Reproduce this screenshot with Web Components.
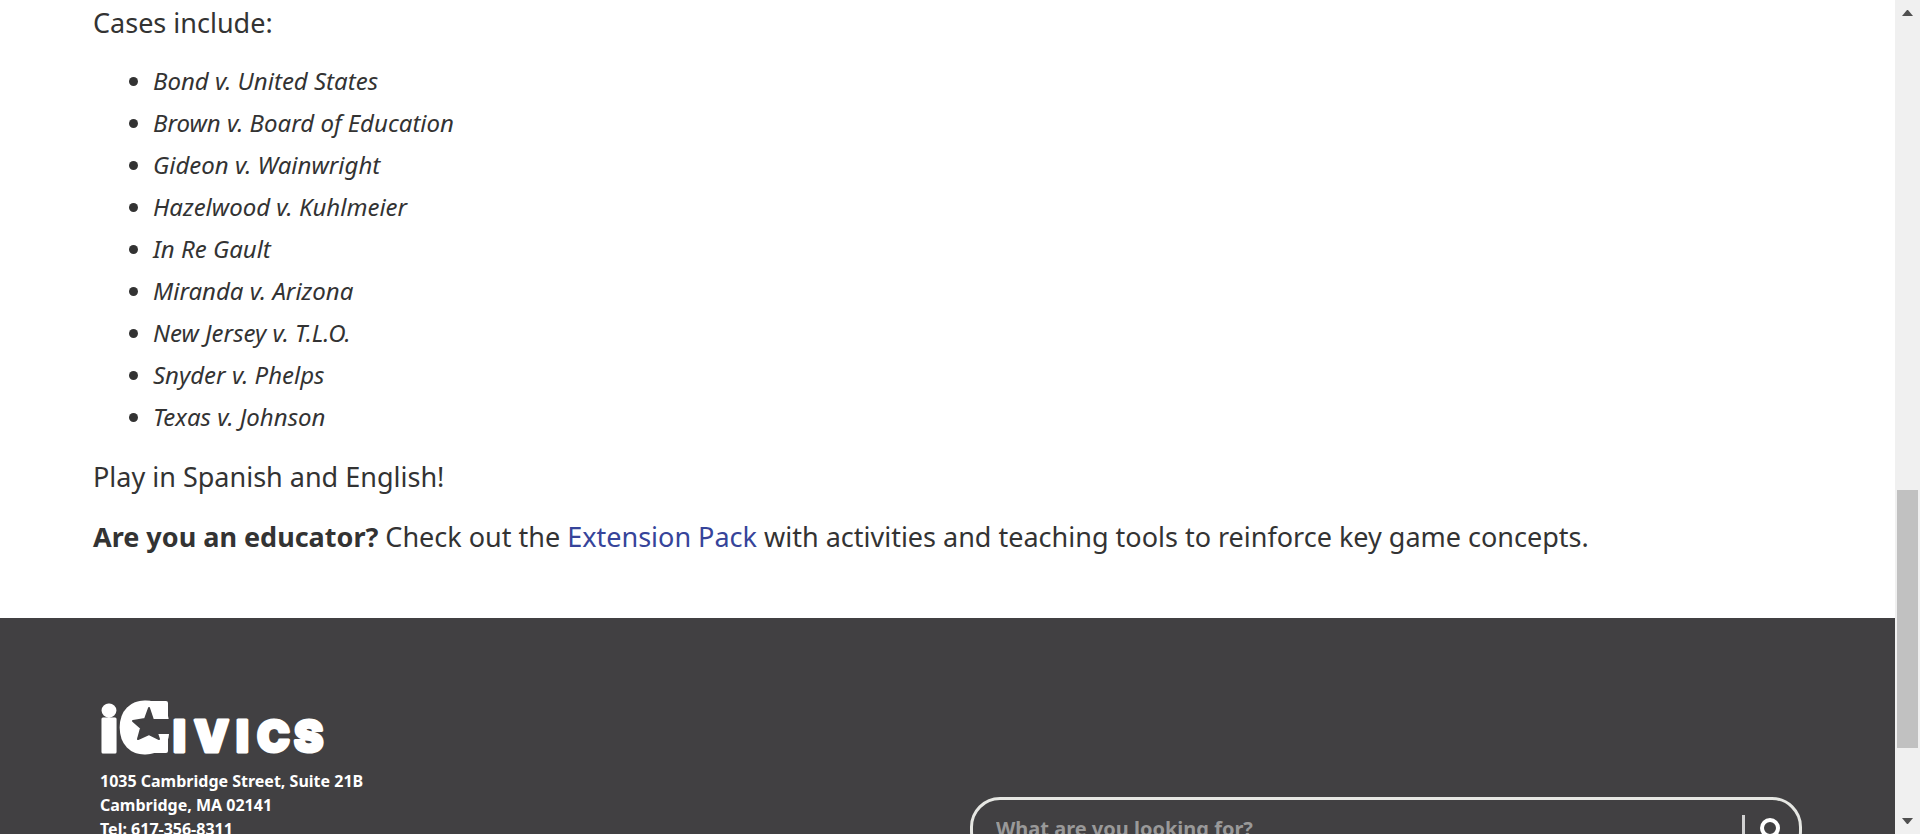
<!DOCTYPE html>
<html lang="en">
<head>
<meta charset="utf-8">
<title>iCivics</title>
<style>
  html, body { margin: 0; height: 100%; overflow: hidden; }
  body { font-family: "Noto Sans", sans-serif; color: #333; background: #fff; }
</style>
</head>
<body>
<site-page>
  <game-details>
    <p>Cases include:</p>
    <case-list cases="Bond v. United States|Brown v. Board of Education|Gideon v. Wainwright|Hazelwood v. Kuhlmeier|In Re Gault|Miranda v. Arizona|New Jersey v. T.L.O.|Snyder v. Phelps|Texas v. Johnson"></case-list>
    <p>Play in Spanish and English!</p>
    <p><strong>Are you an educator?</strong> Check out the <text-link href="#extension-pack">Extension Pack</text-link> with activities and teaching tools to reinforce key game concepts.</p>
  </game-details>
  <site-footer>
    <brand-logo slot="contact"></brand-logo>
    <postal-address slot="contact">
      <span>1035 Cambridge Street, Suite 21B</span>
      <span>Cambridge, MA 02141</span>
      <span>Tel: 617-356-8311</span>
    </postal-address>
    <site-search slot="search"></site-search>
  </site-footer>
  <scroll-rail slot="rail"></scroll-rail>
</site-page>
<script>
  const define = (name, html, setup) => {
    const template = document.createElement('template');
    template.innerHTML = html;
    customElements.define(name, class extends HTMLElement {
      constructor() {
        super();
        this.attachShadow({ mode: 'open' }).append(template.content.cloneNode(true));
      }
      connectedCallback() { if (setup) setup(this, this.shadowRoot); }
    });
  };

  define('site-page', `
    <style>
      :host { display: grid; grid-template-columns: minmax(0, 1fr) 25px; height: 100vh; overflow: hidden; }
      main { display: flex; flex-direction: column; min-height: 0; overflow: hidden; }
    </style>
    <main><slot></slot></main>
    <slot name="rail"></slot>`);

  define('game-details', `
    <style>
      :host { display: block; flex: none; padding: 0 93px 58px; font-size: 27px; line-height: 46px; }
      ::slotted(p) { margin: 0 0 14px; }
      ::slotted(p:last-child) { margin: 0; }
    </style>
    <slot></slot>`);

  define('text-link', `
    <style>
      :host { display: inline; }
      a { color: #36449a; text-decoration: none; }
    </style>
    <a><slot></slot></a>`, (host, root) => {
      root.querySelector('a').href = host.getAttribute('href');
    });

  define('case-list', `
    <style>
      :host { display: block; margin-bottom: 16px; font-size: 24px; line-height: 42px; }
      ul { margin: 0; padding-left: 60px; }
    </style>
    <ul></ul>`, (host, root) => {
      root.querySelector('ul').replaceChildren(...host.getAttribute('cases').split('|').map(name => {
        const li = document.createElement('li');
        const em = document.createElement('em');
        em.textContent = name;
        li.append(em);
        return li;
      }));
    });

  define('site-footer', `
    <style>
      :host { display: block; flex: 1 0 auto; background: #414042; color: #fff; }
      footer { display: grid; grid-template-columns: 1fr 1fr; gap: 38px; padding: 80px 93px 48px 100px; }
      .search { padding-top: 99px; }
    </style>
    <footer>
      <div><slot name="contact"></slot></div>
      <div class="search"><slot name="search"></slot></div>
    </footer>`);

  define('brand-logo', `
    <style>
      :host { display: block; }
      a { display: block; width: 232px; height: 58px; }
      svg { display: block; overflow: visible; }
      text { font-family: Inter, sans-serif; font-weight: 900; fill: #fff; stroke: #fff; stroke-width: 5; stroke-linejoin: round; }
      .small { stroke-width: 3; }
    </style>
    <a href="#home" aria-label="iCivics home">
      <svg width="232" height="58" viewBox="0 0 232 58">
        <text class="small" x="0" y="54" font-size="61">i</text>
        <text x="20" y="53" font-size="65">C</text>
        <text class="small" x="73 94 136 157 194" y="54" font-size="44">IVICS</text>
        <path fill="#fff" stroke="#fff" stroke-width="4" stroke-linejoin="round" d="M46 5h20v15H46zM46 37h20v16H46z"/>
        <circle cx="44" cy="29" r="18" fill="#fff"/>
        <path fill="#414042" stroke="#414042" stroke-width="2" stroke-linejoin="round" d="M49 10l4 12h18v13H57l2 6-10-5-11 5 3-11-8-7 12-2z"/>
      </svg>
    </a>`);

  define('postal-address', `
    <style>
      :host { display: block; margin-top: 13px; font-weight: 700; font-size: 16px; line-height: 24px; }
      address { font-style: normal; }
      ::slotted(span) { display: block; }
    </style>
    <address><slot></slot></address>`);

  define('site-search', `
    <style>
      :host { display: block; }
      form { display: flex; align-items: center; height: 64px; box-sizing: border-box; border: 3px solid #e6e7e3; border-radius: 30px; padding: 0 12px 0 23px; }
      label { position: absolute; width: 1px; height: 1px; overflow: hidden; clip-path: inset(50%); }
      input { flex: 1; min-width: 0; padding: 0; border: 0; outline: 0; background: none; color: #fff; font: 700 20px/28px "Noto Sans", sans-serif; }
      input::placeholder { color: #999; opacity: 1; }
      button { display: flex; border: 0; border-left: 3px solid #d1d1d1; padding: 0 0 0 14px; height: 28px; background: none; color: #fff; }
      svg { display: block; }
    </style>
    <form role="search">
      <label for="q">Search</label>
      <input id="q" type="text" placeholder="What are you looking for?">
      <button type="button" aria-label="Search">
        <svg width="28" height="28" viewBox="0 0 28 28" fill="none" stroke="currentColor"><circle cx="11" cy="13" r="8" stroke-width="4"/><path d="M17 19l7 7" stroke-width="4"/></svg>
      </button>
    </form>`);

  define('scroll-rail', `
    <style>
      :host { display: flex; flex-direction: column; align-items: center; background: #f0f0f0; }
      svg { flex: none; display: block; }
      .before { flex: 465; }
      .thumb { flex: 258; width: 21px; background: #c1c1c1; }
      .after { flex: 61; }
    </style>
    <svg width="25" height="25"><path fill="#505050" d="M7 16h11l-5-6h-1z"/></svg>
    <div class="before"></div><div class="thumb"></div><div class="after"></div>
    <svg width="25" height="25"><path fill="#505050" d="M7 9h11l-5 6h-1z"/></svg>`);
</script>
</body>
</html>
